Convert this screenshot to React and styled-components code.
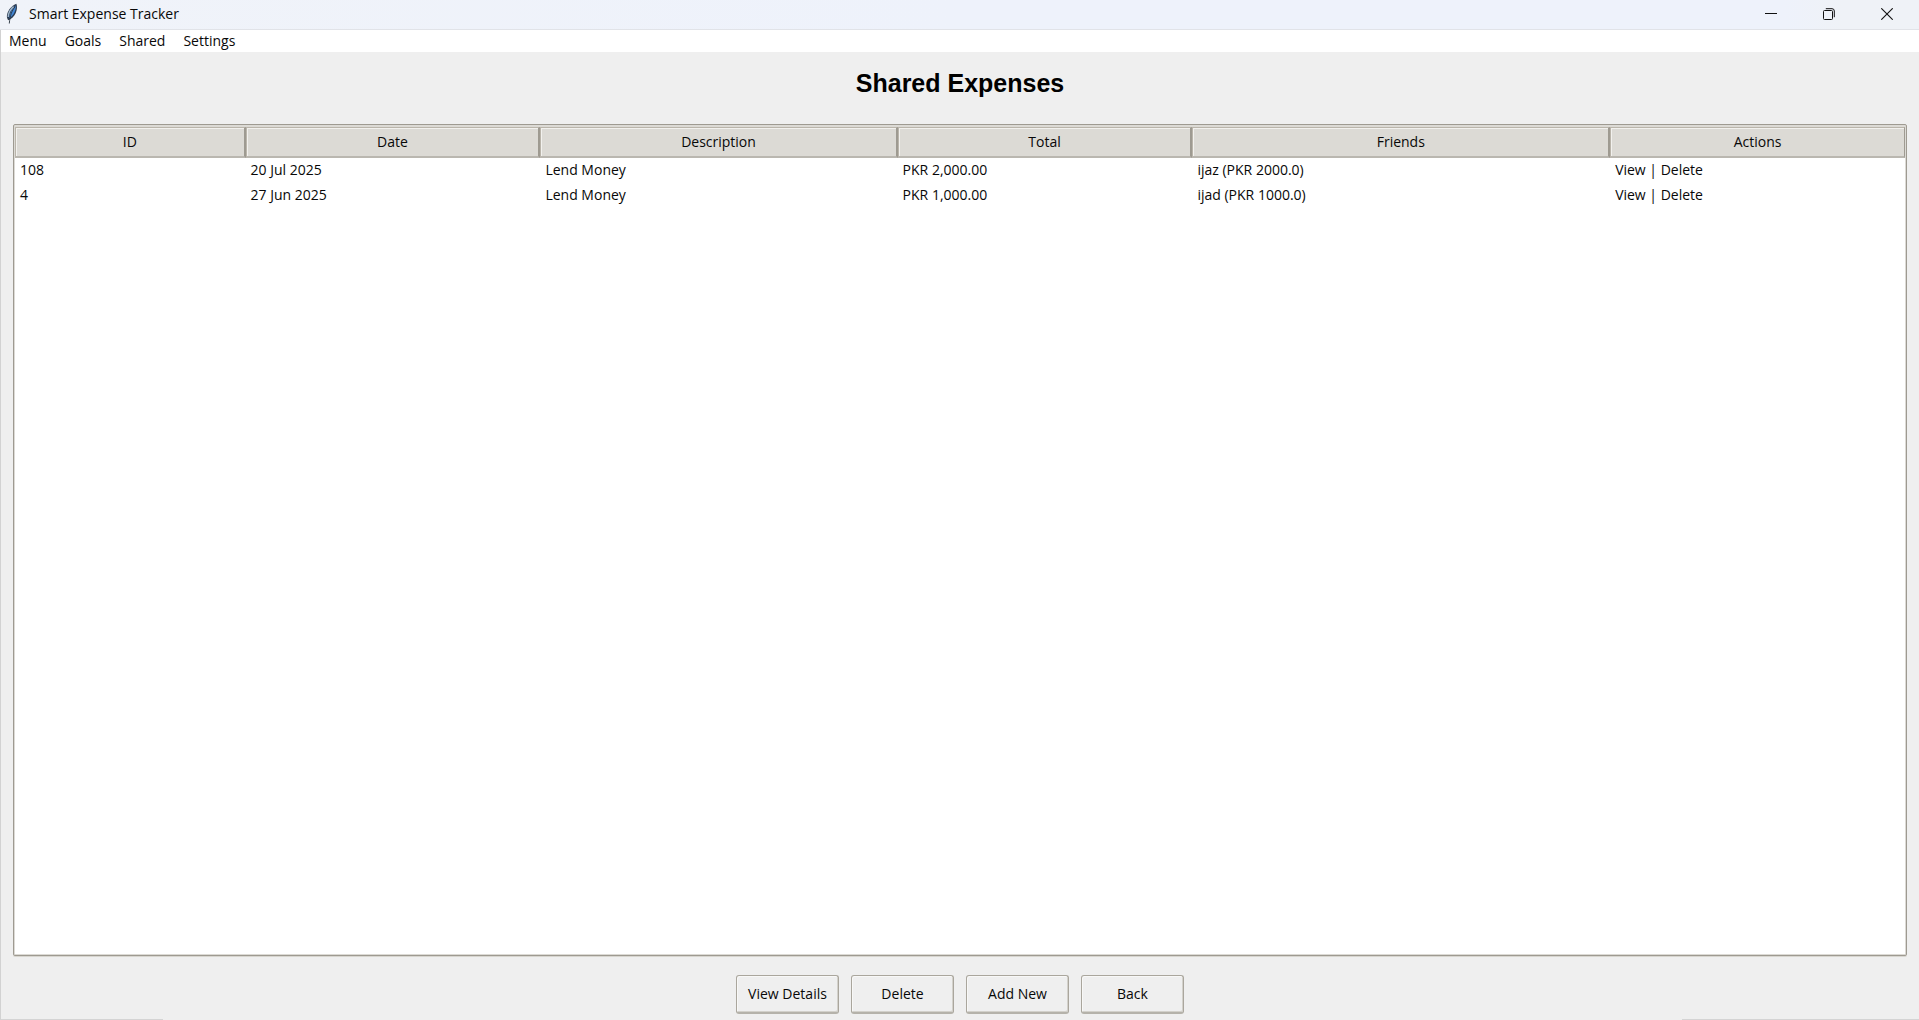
import React from "react";
import styled, { createGlobalStyle } from "styled-components";

const GlobalStyle = createGlobalStyle`
  *, *::before, *::after { box-sizing: border-box; }
  body { margin: 0; background: #efefef; }
  button { font: inherit; color: inherit; }
`;

const Window = styled.div`
  display: flex;
  flex-direction: column;
  height: 100vh;
  background: #efefef;
  color: #080808;
  font-family: "Open Sans", "Noto Sans", sans-serif;
  font-size: 14px;
  line-height: 20px;
`;

const TitleBar = styled.header`
  display: flex;
  align-items: center;
  height: 30px;
  padding: 0 3px 1px 5px;
  border-bottom: 1px solid #e1e3e8;
  background: linear-gradient(90deg, #f0f3f9 0%, #eef2fb 50%, #eef2fb 93%, #eff2f7 96%);
`;

const AppName = styled.span`
  flex: 1;
  padding-left: 10px;
`;

const CaptionButton = styled.button`
  display: grid;
  place-items: center;
  width: 58px;
  height: 28px;
  padding: 0;
  border: 0;
  background: transparent;
`;

const Client = styled.div`
  flex: 1;
  display: flex;
  flex-direction: column;
  min-height: 0;
  border-left: 1px solid #d2d2d2;
  background:
    linear-gradient(#d4d4d4, #d4d4d4) left bottom / 162px 1px no-repeat,
    linear-gradient(#d4d4d4, #d4d4d4) right bottom / 237px 1px no-repeat;
`;

const MenuBar = styled.nav`
  display: flex;
  gap: 1px;
  height: 22px;
  background: #fff;
`;

const MenuItem = styled.button`
  padding: 0 9px 0 8px;
  border: 0;
  background: transparent;
  line-height: 22px;
`;

const Content = styled.main`
  flex: 1;
  display: flex;
  flex-direction: column;
  min-height: 0;
  padding: 15px 12px 6px;
`;

const Heading = styled.h1`
  margin: 0 0 25px;
  color: #000;
  font: bold 25px/32px "Liberation Sans", Arial, sans-serif;
  text-align: center;
`;

const TreeFrame = styled.div`
  flex: 1;
  min-height: 0;
  padding: 2px 1px 1px;
  border: 1px solid #9e9a91;
  border-radius: 2px;
  background: #fff;
  box-shadow: inset 0 0 0 1px #dcdad5, inset 0 2px #dcdad5, 0 1px #d8d6d0;
`;

const Tree = styled.table`
  width: 100%;
  table-layout: fixed;
  border-collapse: separate;
  border-spacing: 0;
`;

const Column = styled.col`
  width: ${(p) => p.$share}%;
`;

const HeaderCell = styled.th`
  height: 31px;
  padding: 0;
  border: 1px solid #bab5ab;
  border-right: 2px solid #9e9a91;
  border-bottom: 2px solid #bab7b0;
  background: #dcdad5;
  box-shadow: inset 1px 1px #f2f1ee;
  font-weight: 400;

  &:last-child {
    border-right-width: 1px;
  }
`;

const Cell = styled.td`
  height: 25px;
  padding: 0 5px 2px;
  white-space: nowrap;
`;

const Actions = styled.div`
  display: flex;
  justify-content: center;
  gap: 12px;
  margin-top: 19px;
`;

const ActionButton = styled.button`
  width: 103px;
  height: 39px;
  padding: 0;
  border: 1px solid #aaa69d;
  border-bottom: 2px solid #b5b2aa;
  border-radius: 3px;
  background: #efefef;
  box-shadow: inset 1px 1px #f8f8f7, inset -1px -1px #d3d1cb;
`;

const columns = [
  { name: "ID", share: 12.2 },
  { name: "Date", share: 15.6 },
  { name: "Description", share: 18.9 },
  { name: "Total", share: 15.6 },
  { name: "Friends", share: 22.1 },
  { name: "Actions", share: 15.6 },
];

const expenses = [
  ["108", "20 Jul 2025", "Lend Money", "PKR 2,000.00", "ijaz (PKR 2000.0)", "View | Delete"],
  ["4", "27 Jun 2025", "Lend Money", "PKR 1,000.00", "ijad (PKR 1000.0)", "View | Delete"],
];

const Feather = () => (
  <svg width="14" height="22" viewBox="0 0 14 22" aria-hidden="true">
    <path d="M11.400.8C7 2.300 3 7 2 12c-.3 2 .1 3.700 1.200 5.200l1.600-.6c3.800-2 6-5.600 6.900-9.600.4-2.200.4-4.200-.3-6.200z" fill="#2c3b50" />
    <path d="M10.800 2.500C7.300 5.500 4.800 9.500 4.300 15.400c3.300-2.200 5.300-5.400 6.200-8.900.4-1.600.5-2.800.3-4z" fill="#4287d6" />
    <path d="M8.600 3.600C5.400 6.200 3.500 9.500 3.200 14" fill="none" stroke="#9fb6cc" strokeWidth="1.400" />
    <path d="M10.200 3.500C6.800 8 5 12 4.300 20.500" fill="none" stroke="#26303b" strokeWidth=".9" />
  </svg>
);

const MinimizeIcon = () => (
  <svg width="12" height="12" viewBox="0 0 12 12" aria-hidden="true">
    <path d="M0 5.500H12" stroke="#111" />
  </svg>
);

const RestoreIcon = () => (
  <svg width="12" height="12" viewBox="0 0 12 12" fill="none" stroke="#111" aria-hidden="true">
    <rect x=".5" y="2.500" width="9" height="9" rx="1" />
    <path d="M2.800 .7H9a2.300 2.300 0 0 1 2.300 2.300V9.200" />
  </svg>
);

const CloseIcon = () => (
  <svg width="12" height="12" viewBox="0 0 12 12" aria-hidden="true">
    <path d="M.3 .3 11.700 11.700M11.700 .3 .3 11.700" stroke="#111" strokeWidth="1.100" />
  </svg>
);

export default function App() {
  return (
    <Window>
      <GlobalStyle />
      <TitleBar>
        <Feather />
        <AppName>Smart Expense Tracker</AppName>
        <CaptionButton aria-label="Minimize"><MinimizeIcon /></CaptionButton>
        <CaptionButton aria-label="Restore"><RestoreIcon /></CaptionButton>
        <CaptionButton aria-label="Close"><CloseIcon /></CaptionButton>
      </TitleBar>
      <Client>
        <MenuBar>
          {["Menu", "Goals", "Shared", "Settings"].map((label) => (
            <MenuItem key={label}>{label}</MenuItem>
          ))}
        </MenuBar>
        <Content>
          <Heading>Shared Expenses</Heading>
          <TreeFrame>
            <Tree>
              <colgroup>
                {columns.map((c) => <Column key={c.name} $share={c.share} />)}
              </colgroup>
              <thead>
                <tr>{columns.map((c) => <HeaderCell key={c.name} scope="col">{c.name}</HeaderCell>)}</tr>
              </thead>
              <tbody>
                {expenses.map((row) => (
                  <tr key={row[0]}>
                    {row.map((value, i) => <Cell key={columns[i].name}>{value}</Cell>)}
                  </tr>
                ))}
              </tbody>
            </Tree>
          </TreeFrame>
          <Actions>
            {["View Details", "Delete", "Add New", "Back"].map((label) => (
              <ActionButton key={label}>{label}</ActionButton>
            ))}
          </Actions>
        </Content>
      </Client>
    </Window>
  );
}
